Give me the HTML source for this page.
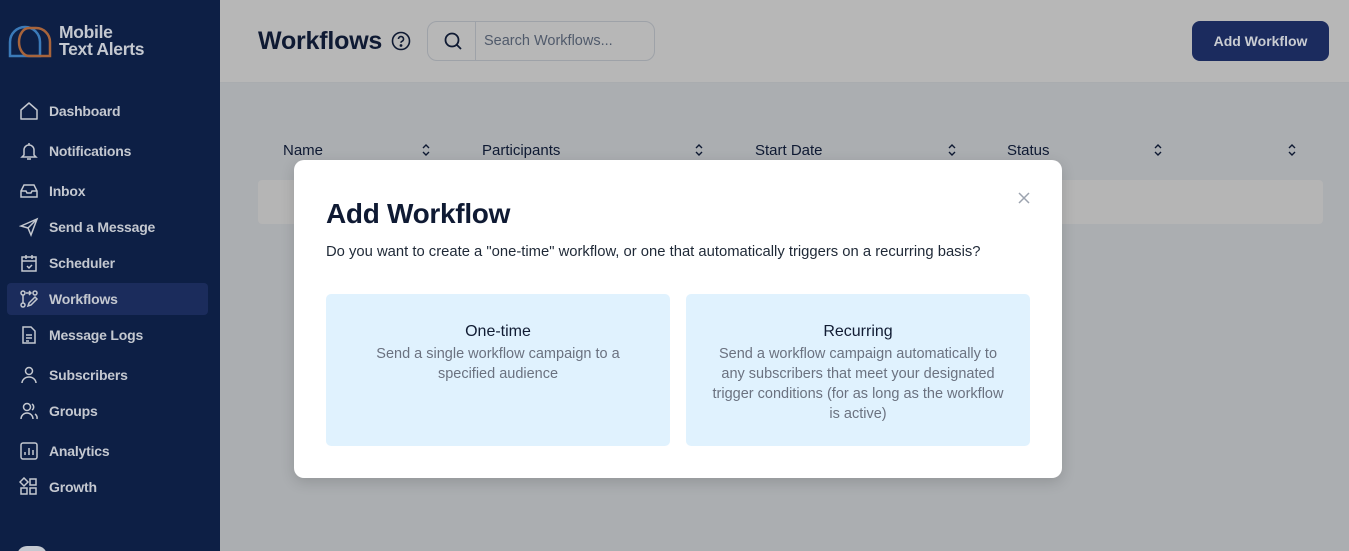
<!DOCTYPE html>
<html><head><meta charset="utf-8"><style>
*{box-sizing:border-box;margin:0;padding:0}
html,body{width:1349px;height:551px;overflow:hidden}
body{font-family:"Liberation Sans",sans-serif;background:#abaeb1;position:relative}
.sb{position:absolute;left:0;top:0;width:220px;height:551px;background:#0d1f45;overflow:hidden}
.logo{position:absolute;left:59px;top:24px;color:#c4c8d0;font-weight:bold;font-size:17.5px;line-height:17px;letter-spacing:-0.3px}
.nav{position:absolute;left:0;width:220px;height:32px;color:#c4c8d0;font-weight:bold;font-size:14px;letter-spacing:-0.2px}
.nav span{position:absolute;left:49px;top:8px}
.nav svg{position:absolute;left:19px;top:6px}
.act{left:7px;width:201px;background:#1b2c5c;border-radius:4px}
.act span{left:42px}.act svg{left:12px}
.hdr{position:absolute;left:220px;top:0;width:1129px;height:83px;background:#b7b7b7;border-bottom:1px solid #a9acaf}
.t{position:absolute;color:#0f1a33;white-space:nowrap}
.srt{position:absolute;top:143px;width:8px;height:14px}
.modal{position:absolute;left:294px;top:160px;width:768px;height:318px;background:#fff;border-radius:10px;box-shadow:0 4px 14px rgba(0,0,0,.15)}
.card{position:absolute;top:134px;width:344px;height:152px;background:#e0f2fe;border-radius:5px;text-align:center}
.card h3{font-weight:normal;font-size:16px;color:#111c33;margin-top:28px;line-height:20px}
.card p{font-size:14.5px;color:#6b7280;line-height:20px;margin:2px auto 0}
</style></head><body>
<div class="sb">
<svg style="position:absolute;left:8px;top:24px" width="46" height="34" viewBox="0 0 46 34"><path d="M2 32V18A15 15 0 0 1 32 18V32Z" fill="none" stroke="#3b7ab8" stroke-width="2.5"/><path d="M21 32A10 14 0 1 1 21 4H28A14 14 0 0 1 42 18V32Z" fill="none" stroke="#a8643b" stroke-width="2.5"/></svg>
<div class="logo">Mobile<br>Text Alerts</div>
<div class="nav" style="top:95px"><svg width="20" height="20" viewBox="0 0 20 20" fill="none" stroke="#c4c8d0" stroke-width="1.5"><path d="M2 9L10 2L18 9V18H2Z" stroke-linejoin="round"/></svg><span>Dashboard</span></div>
<div class="nav" style="top:135px"><svg width="20" height="20" viewBox="0 0 20 20" fill="none" stroke="#c4c8d0" stroke-width="1.5"><path d="M5 14V9a5 5 0 0 1 10 0v5l2 2H3Z M8 18h4 M10 2v2"/></svg><span>Notifications</span></div>
<div class="nav" style="top:175px"><svg width="20" height="20" viewBox="0 0 20 20" fill="none" stroke="#c4c8d0" stroke-width="1.5"><path d="M2 10L5 4h10l3 6v6H2Z M2 10h5l1 2h4l1-2h5"/></svg><span>Inbox</span></div>
<div class="nav" style="top:211px"><svg width="20" height="20" viewBox="0 0 20 20" fill="none" stroke="#c4c8d0" stroke-width="1.5"><path d="M2 9L18 2L12 18L9 11Z M9 11L18 2"/></svg><span>Send a Message</span></div>
<div class="nav" style="top:247px"><svg width="20" height="20" viewBox="0 0 20 20" fill="none" stroke="#c4c8d0" stroke-width="1.5"><path d="M3 4h14v14H3Z M3 8h14 M7 2v4 M13 2v4 M8 13l2 2 3-3"/></svg><span>Scheduler</span></div>
<div class="nav act" style="top:283px"><svg width="20" height="20" viewBox="0 0 20 20" fill="none" stroke="#c4c8d0" stroke-width="1.5"><circle cx="4" cy="4" r="2"/><circle cx="4" cy="16" r="2"/><circle cx="16" cy="4" r="2"/><path d="M4 6v8 M7 4h5 M10 2l2 2-2 2 M9 17l1-3 6-6 2 2-6 6Z"/></svg><span>Workflows</span></div>
<div class="nav" style="top:319px"><svg width="20" height="20" viewBox="0 0 20 20" fill="none" stroke="#c4c8d0" stroke-width="1.5"><path d="M4 2h8l4 4v12H4Z M7 10h6 M7 13h6 M7 16h3"/></svg><span>Message Logs</span></div>
<div class="nav" style="top:359px"><svg width="20" height="20" viewBox="0 0 20 20" fill="none" stroke="#c4c8d0" stroke-width="1.5"><circle cx="10" cy="6" r="3.5"/><path d="M3 18a7 6 0 0 1 14 0"/></svg><span>Subscribers</span></div>
<div class="nav" style="top:395px"><svg width="20" height="20" viewBox="0 0 20 20" fill="none" stroke="#c4c8d0" stroke-width="1.5"><circle cx="8" cy="6" r="3.5"/><path d="M2 18a6 6 0 0 1 12 0 M13 3a3.5 3.5 0 0 1 0 6 M16 13a5 5 0 0 1 2 5"/></svg><span>Groups</span></div>
<div class="nav" style="top:435px"><svg width="20" height="20" viewBox="0 0 20 20" fill="none" stroke="#c4c8d0" stroke-width="1.5"><rect x="2" y="2" width="16" height="16" rx="2"/><path d="M6 14v-3 M10 14V7 M14 14v-5"/></svg><span>Analytics</span></div>
<div class="nav" style="top:471px"><svg width="20" height="20" viewBox="0 0 20 20" fill="none" stroke="#c4c8d0" stroke-width="1.5"><path d="M5 1l4 4-4 4-4-4Z"/><rect x="11" y="2" width="6" height="6"/><rect x="2" y="11" width="6" height="6"/><rect x="11" y="11" width="6" height="6"/></svg><span>Growth</span></div>
<div style="position:absolute;left:17px;top:546px;width:30px;height:20px;border-radius:10px;background:#c4c8d0"></div>
</div>
<div class="hdr"></div>
<div class="t" style="left:258px;top:27px;font-size:25px;font-weight:bold;letter-spacing:-0.2px">Workflows</div>
<svg style="position:absolute;left:391px;top:31px" width="20" height="20" viewBox="0 0 20 20" fill="none" stroke="#0f1a33" stroke-width="1.6"><circle cx="10" cy="10" r="8.5"/><path d="M7.5 8a2.5 2.5 0 1 1 3.5 2.3c-.7.3-1 .8-1 1.5"/><circle cx="10" cy="14.5" r=".6" fill="#0f1a33"/></svg>
<div style="position:absolute;left:427px;top:21px;width:228px;height:40px;border:1px solid #9ea2a8;border-radius:10px"></div>
<div style="position:absolute;left:475px;top:22px;width:1px;height:38px;background:#9ea2a8"></div>
<svg style="position:absolute;left:443px;top:31px" width="20" height="20" viewBox="0 0 20 20" fill="none" stroke="#0f1a33" stroke-width="1.8"><circle cx="9" cy="9" r="6.5"/><path d="M14 14l4 4"/></svg>
<div class="t" style="left:484px;top:33px;font-size:14.5px;color:#505a6b">Search Workflows...</div>
<div style="position:absolute;left:1192px;top:21px;width:137px;height:40px;background:#1b2b5e;border-radius:8px;color:#c9ccd2;font-weight:bold;font-size:14px;text-align:center;line-height:40px">Add Workflow</div>
<div class="t" style="left:283px;top:142px;font-size:15px">Name</div>
<div class="t" style="left:482px;top:142px;font-size:15px">Participants</div>
<div class="t" style="left:755px;top:142px;font-size:15px">Start Date</div>
<div class="t" style="left:1007px;top:142px;font-size:15px">Status</div>
<svg class="srt" style="left:422px" viewBox="0 0 8 14" fill="none" stroke="#0f1a33" stroke-width="1.4"><path d="M1 5l3-3 3 3M1 9l3 3 3-3"/></svg>
<svg class="srt" style="left:695px" viewBox="0 0 8 14" fill="none" stroke="#0f1a33" stroke-width="1.4"><path d="M1 5l3-3 3 3M1 9l3 3 3-3"/></svg>
<svg class="srt" style="left:948px" viewBox="0 0 8 14" fill="none" stroke="#0f1a33" stroke-width="1.4"><path d="M1 5l3-3 3 3M1 9l3 3 3-3"/></svg>
<svg class="srt" style="left:1154px" viewBox="0 0 8 14" fill="none" stroke="#0f1a33" stroke-width="1.4"><path d="M1 5l3-3 3 3M1 9l3 3 3-3"/></svg>
<svg class="srt" style="left:1288px" viewBox="0 0 8 14" fill="none" stroke="#0f1a33" stroke-width="1.4"><path d="M1 5l3-3 3 3M1 9l3 3 3-3"/></svg>
<div style="position:absolute;left:258px;top:180px;width:1065px;height:44px;background:#b5b5b5;border-radius:4px"></div>
<div class="modal">
<svg style="position:absolute;left:724px;top:32px" width="12" height="12" viewBox="0 0 12 12" stroke="#9ca3af" stroke-width="1.5"><path d="M1 1l10 10M11 1L1 11"/></svg>
<div class="t" style="left:32px;top:38px;font-size:28px;font-weight:bold;letter-spacing:-0.3px">Add Workflow</div>
<div class="t" style="left:32px;top:84px;font-size:14.8px;color:#1f2937">Do you want to create a "one-time" workflow, or one that automatically triggers on a recurring basis?</div>
<div class="card" style="left:32px"><h3>One-time</h3><p style="width:270px">Send a single workflow campaign to a specified audience</p></div>
<div class="card" style="left:392px"><h3>Recurring</h3><p style="width:302px">Send a workflow campaign automatically to any subscribers that meet your designated trigger conditions (for as long as the workflow is active)</p></div>
</div>
</body></html>
